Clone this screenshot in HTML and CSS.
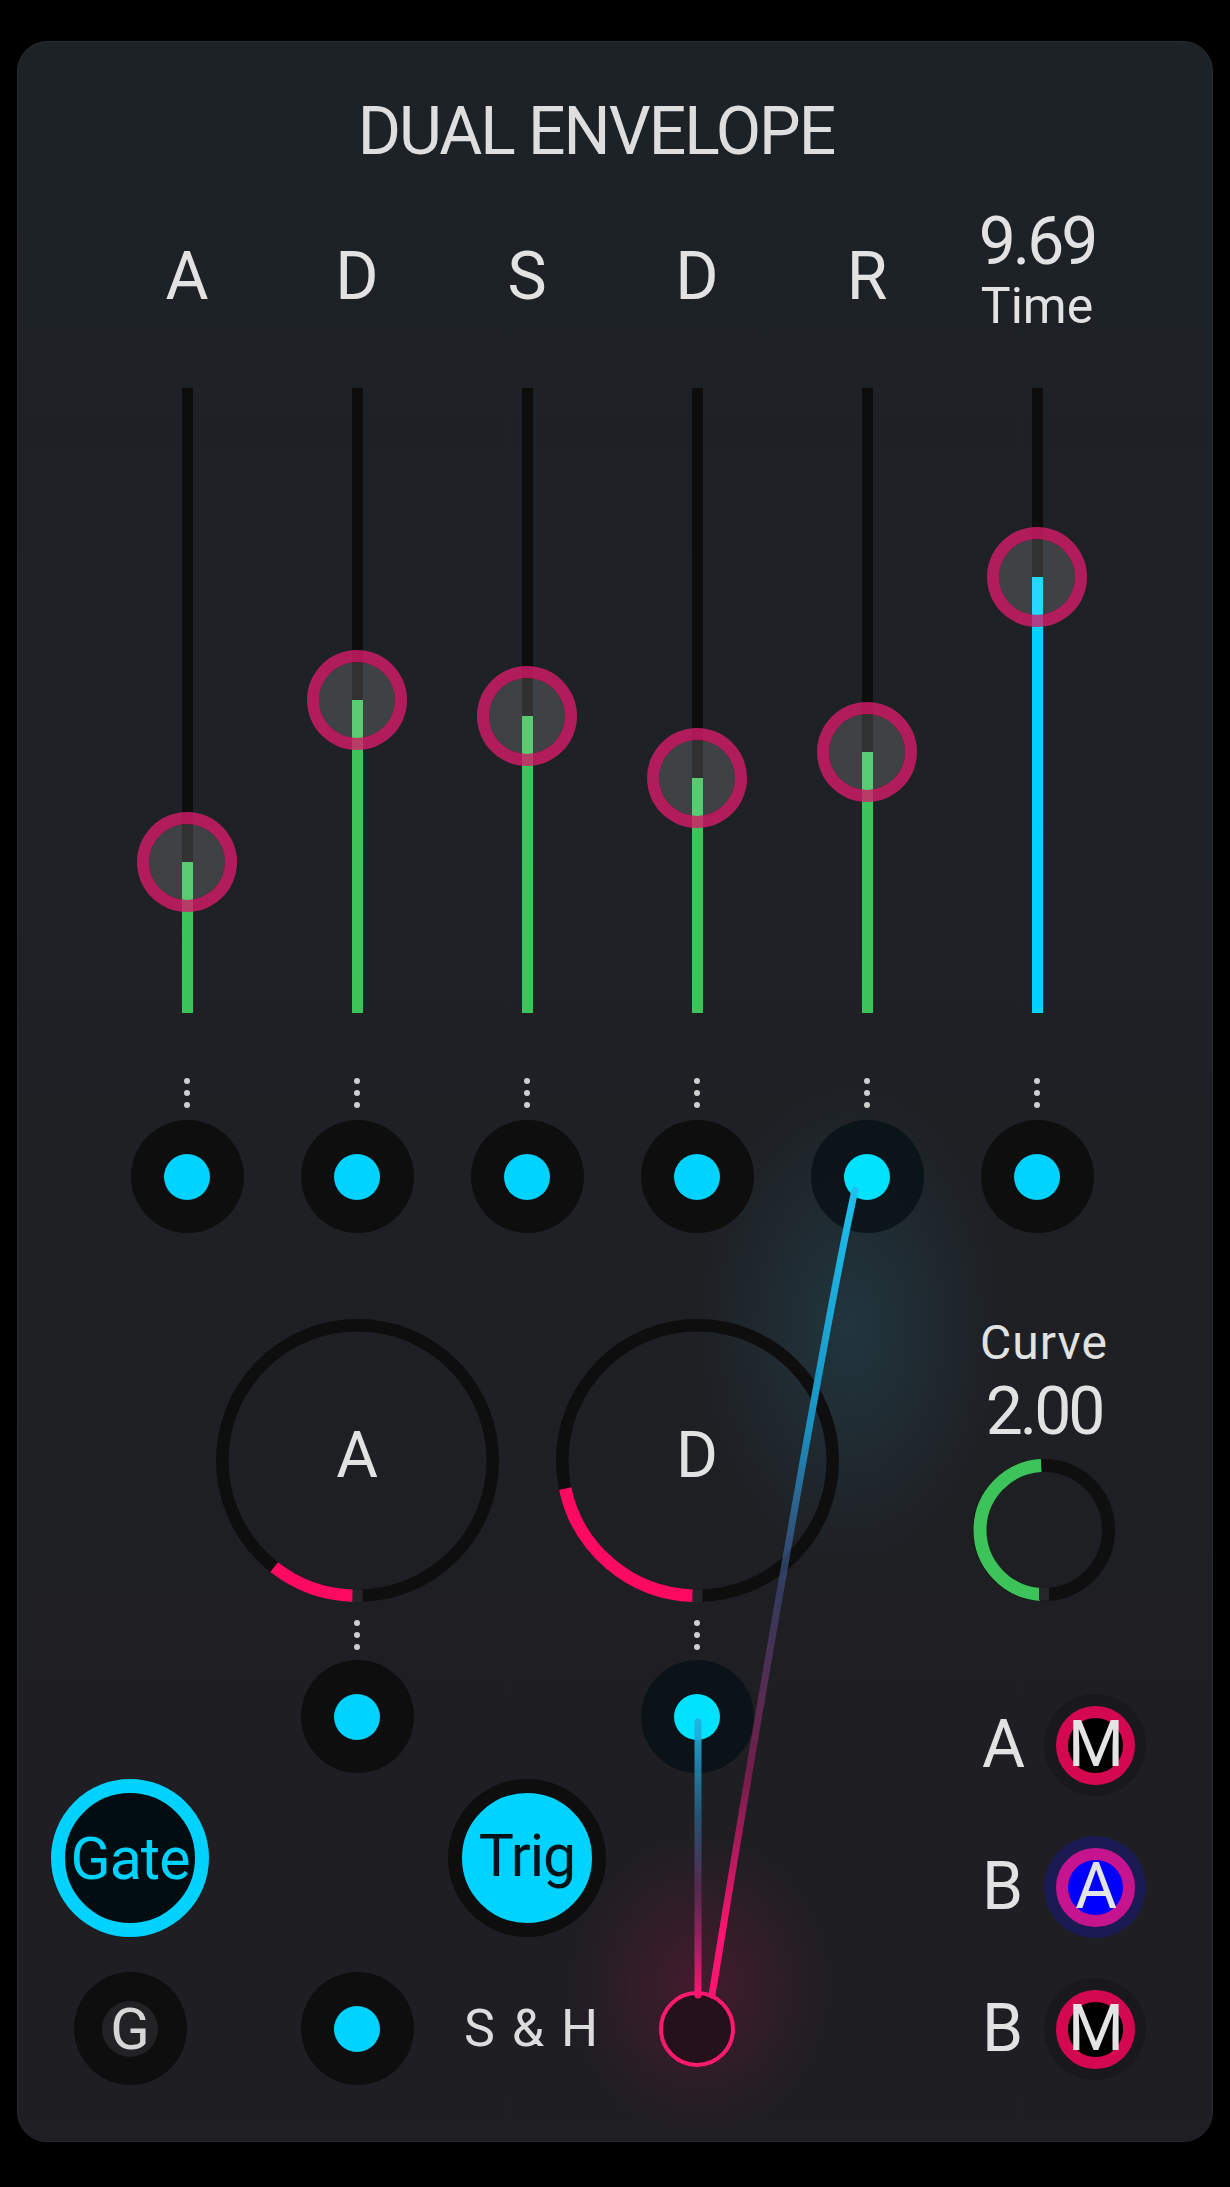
FILE: index.html
```html
<!DOCTYPE html>
<html lang="en">
<head>
  <meta charset="UTF-8">
  <meta name="viewport" content="width=device-width, initial-scale=1.0">
  <title>Dual Envelope</title>
  <link rel="stylesheet" href="styles.css">
</head>
<body>
  <div class="panel">
    <h1 class="title">DUAL ENVELOPE</h1>

    <div class="sliders">
      <div class="col">
        <div class="label">A</div>
        <div class="slider" style="--v:151px"><div class="track"><div class="fill"></div></div><div class="thumb"></div></div>
        <div class="dots"><i></i><i></i><i></i></div>
        <div class="jack"><span></span></div>
      </div>
      <div class="col">
        <div class="label">D</div>
        <div class="slider" style="--v:313px"><div class="track"><div class="fill"></div></div><div class="thumb"></div></div>
        <div class="dots"><i></i><i></i><i></i></div>
        <div class="jack"><span></span></div>
      </div>
      <div class="col">
        <div class="label">S</div>
        <div class="slider" style="--v:297px"><div class="track"><div class="fill"></div></div><div class="thumb"></div></div>
        <div class="dots"><i></i><i></i><i></i></div>
        <div class="jack"><span></span></div>
      </div>
      <div class="col">
        <div class="label">D</div>
        <div class="slider" style="--v:235px"><div class="track"><div class="fill"></div></div><div class="thumb"></div></div>
        <div class="dots"><i></i><i></i><i></i></div>
        <div class="jack"><span></span></div>
      </div>
      <div class="col">
        <div class="label">R</div>
        <div class="slider" style="--v:261px"><div class="track"><div class="fill"></div></div><div class="thumb"></div></div>
        <div class="dots"><i></i><i></i><i></i></div>
        <div class="jack linked"><span></span></div>
      </div>
      <div class="col">
        <div class="label label-time"><span class="value">9.69</span><span class="unit">Time</span></div>
        <div class="slider" style="--v:436px"><div class="track"><div class="fill time-fill"></div></div><div class="thumb"></div></div>
        <div class="dots"><i></i><i></i><i></i></div>
        <div class="jack"><span></span></div>
      </div>
    </div>

    <div class="lower">
      <div class="lower-grid">
        <!-- row 1: big knobs -->
        <div class="cell c2 r1">
          <div class="knob">
            <svg width="283" height="283" viewBox="0 0 283 283">
              <circle cx="141.5" cy="141.5" r="135.25" fill="none" stroke="#0e0e0f" stroke-width="12.5"/>
              <path d="M136.8 276.7 A135.25 135.25 0 0 1 58.2 248.1" fill="none" stroke="#ff0a62" stroke-width="12.5"/>
              <rect x="136.5" y="270.5" width="10" height="12.5" fill="#26262a"/>
            </svg>
            <span class="knob-label">A</span>
          </div>
        </div>
        <div class="cell c4 r1">
          <div class="knob">
            <svg width="283" height="283" viewBox="0 0 283 283">
              <circle cx="141.5" cy="141.5" r="135.25" fill="none" stroke="#0e0e0f" stroke-width="12.5"/>
              <path d="M136.8 276.7 A135.25 135.25 0 0 1 9.2 169.6" fill="none" stroke="#ff0a62" stroke-width="12.5"/>
              <rect x="136.5" y="270.5" width="10" height="12.5" fill="#26262a"/>
            </svg>
            <span class="knob-label">D</span>
          </div>
        </div>

        <!-- row 2: knob mod inputs -->
        <div class="cell c2 r2">
          <div class="dots small"><i></i><i></i><i></i></div>
          <div class="jack"><span></span></div>
        </div>
        <div class="cell c4 r2">
          <div class="dots small"><i></i><i></i><i></i></div>
          <div class="jack linked"><span></span></div>
        </div>

        <!-- row 3: gate / trig -->
        <div class="cell c1 r3">
          <div class="btn-gate">Gate</div>
        </div>
        <div class="cell c3 r3">
          <div class="btn-trig">Trig</div>
        </div>

        <!-- row 4 -->
        <div class="cell c1 r4">
          <div class="btn-g"><span>G</span></div>
        </div>
        <div class="cell c2 r4">
          <div class="jack"><span></span></div>
        </div>
        <div class="cell c3 r4 mid">
          <div class="sh">S &amp; H</div>
        </div>
        <div class="cell c4 r4 mid">
          <div class="out-jack"></div>
        </div>
      </div>

      <div class="side">
        <div class="curve-name">Curve</div>
        <div class="curve-value">2.00</div>
        <div class="curve-knob">
          <svg width="142" height="142" viewBox="0 0 142 142">
            <circle cx="71" cy="71" r="64.5" fill="none" stroke="#0f0f10" stroke-width="13"/>
            <path d="M67.6 135.4 A64.5 64.5 0 0 1 68.2 6.6" fill="none" stroke="#3cc45a" stroke-width="13"/>
            <rect x="66" y="128.5" width="10" height="13" fill="#262629"/>
          </svg>
        </div>

        <div class="mrow first">
          <span class="mlabel">A</span>
          <div class="mbtn"><span>M</span></div>
        </div>
        <div class="mrow">
          <span class="mlabel">B</span>
          <div class="mbtn active"><span>A</span></div>
        </div>
        <div class="mrow">
          <span class="mlabel">B</span>
          <div class="mbtn"><span>M</span></div>
        </div>
      </div>
    </div>

    <svg class="cables" width="1194" height="2099" viewBox="0 0 1194 2099">
      <defs>
        <linearGradient id="cableLong" gradientUnits="userSpaceOnUse" x1="0" y1="1148" x2="0" y2="1953">
          <stop offset="0" stop-color="#1ec0ee"/>
          <stop offset="0.3" stop-color="#1a90c0"/>
          <stop offset="0.5" stop-color="rgba(70,80,140,0.55)"/>
          <stop offset="0.72" stop-color="rgba(170,30,100,0.6)"/>
          <stop offset="0.92" stop-color="#ff1470"/>
          <stop offset="1" stop-color="#ff1470"/>
        </linearGradient>
        <linearGradient id="cableShort" gradientUnits="userSpaceOnUse" x1="0" y1="1675" x2="0" y2="1953">
          <stop offset="0" stop-color="#1eb6e6"/>
          <stop offset="0.35" stop-color="rgba(40,120,170,0.6)"/>
          <stop offset="0.62" stop-color="rgba(120,50,110,0.55)"/>
          <stop offset="1" stop-color="#ff1470"/>
        </linearGradient>
      </defs>
      <path d="M837 1148 C812 1258 742 1658 694 1953" fill="none" stroke="url(#cableLong)" stroke-width="7" stroke-linecap="round"/>
      <path d="M680 1680 L680 1953" fill="none" stroke="url(#cableShort)" stroke-width="7" stroke-linecap="round"/>
    </svg>
  </div>
</body>
</html>
```

FILE: styles.css
```css
* {
  box-sizing: border-box;
}

body {
  margin: 0;
  background: #000;
  font-family: Roboto, "Liberation Sans", sans-serif;
  color: #e2e2e2;
}

.panel {
  position: relative;
  width: 1196px;
  height: 2101px;
  margin: 41px 0 0 17px;
  padding-top: 57px;
  border: 1px solid #262b2f;
  border-radius: 30px;
  overflow: hidden;
  background:
    radial-gradient(ellipse 150px 240px at 832px 1285px, rgba(40, 110, 130, 0.28), rgba(40, 110, 130, 0) 100%),
    radial-gradient(ellipse 130px 150px at 682px 1943px, rgba(160, 20, 75, 0.28), rgba(160, 20, 75, 0) 100%),
    linear-gradient(180deg, #1d2226 0%, #1e2024 55%, #1f1e22 100%);
}

.title {
  margin: 0;
  padding-right: 38px;
  font-size: 66px;
  line-height: 1;
  font-weight: 400;
  letter-spacing: -2px;
  text-align: center;
  color: #dedede;
}

/* top section: six faders */
.sliders {
  display: grid;
  grid-template-columns: repeat(6, 170px);
  margin: 51px 0 0 84px;
}

.col {
  display: flex;
  flex-direction: column;
  align-items: center;
}

.label {
  height: 122px;
  display: flex;
  flex-direction: column;
  justify-content: center;
  align-items: center;
  font-size: 66px;
  line-height: 1;
}

.label-time {
  padding-bottom: 14px;
}

.label-time .value {
  font-size: 66px;
  letter-spacing: -3px;
}

.label-time .unit {
  font-size: 50px;
  margin-top: 6px;
}

.slider {
  position: relative;
  width: 100px;
  height: 625px;
  margin-top: 50px;
}

.track {
  position: relative;
  width: 11px;
  height: 100%;
  margin: 0 auto;
  background: #0d0d0d;
}

.fill {
  position: absolute;
  left: 0;
  right: 0;
  bottom: 0;
  height: var(--v);
  background: #3cc45a;
}

.fill.time-fill {
  background: #00d2ff;
}

.thumb {
  position: absolute;
  left: 0;
  bottom: calc(var(--v) - 50px);
  width: 100px;
  height: 100px;
  border-radius: 50%;
  border: 12px solid rgba(215, 28, 105, 0.8);
  background: rgba(255, 255, 255, 0.15);
  background-clip: padding-box;
}

.dots {
  display: flex;
  flex-direction: column;
  gap: 6px;
  margin-top: 65px;
}

.dots i {
  display: block;
  width: 6px;
  height: 6px;
  border-radius: 50%;
  background: #cfcfcf;
}

.dots.small {
  margin-top: 2px;
}

.jack {
  width: 113px;
  height: 113px;
  margin-top: 12px;
  border-radius: 50%;
  background: #0e0e0f;
  display: flex;
  align-items: center;
  justify-content: center;
}

.jack span {
  width: 46px;
  height: 46px;
  border-radius: 50%;
  background: #00d3ff;
}

.jack.linked {
  background: rgba(8, 18, 22, 0.85);
}

.jack.linked span {
  background: #00e2ff;
}

/* lower section */
.lower {
  display: flex;
  margin-top: 86px;
}

.lower-grid {
  display: grid;
  grid-template-columns: 224px 230px 110px 230px;
  grid-template-rows: 299px 161px 193px 113px;
}

.cell {
  display: flex;
  flex-direction: column;
  align-items: center;
}

.cell.mid {
  justify-content: center;
}

.c1 { grid-column: 1; }
.c2 { grid-column: 2; }
.c3 { grid-column: 3; }
.c4 { grid-column: 4; }
.r1 { grid-row: 1; }
.r2 { grid-row: 2; }
.r3 { grid-row: 3; }
.r4 { grid-row: 4; }

.r2 .jack {
  margin-top: 10px;
}

.r4 .jack {
  margin-top: 0;
}

.knob {
  position: relative;
  width: 283px;
  height: 283px;
  flex: none;
}

.knob svg {
  display: block;
}

.knob-label {
  position: absolute;
  inset: 0;
  display: flex;
  align-items: center;
  justify-content: center;
  padding-bottom: 10px;
  font-size: 64px;
  line-height: 1;
}

.btn-gate,
.btn-trig {
  width: 158px;
  height: 158px;
  border-radius: 50%;
  border: 14px solid #00d2ff;
  display: flex;
  align-items: center;
  justify-content: center;
  font-size: 59px;
  line-height: 1;
  letter-spacing: -1px;
  flex: none;
}

.btn-gate {
  background: #020d12;
  color: #00d2ff;
}

.btn-trig {
  border-color: #0e0e0f;
  background: #00d3ff;
  color: #061318;
  padding-bottom: 6px;
}

.btn-g {
  width: 113px;
  height: 113px;
  border-radius: 50%;
  background: #0e0e0f;
  display: flex;
  align-items: center;
  justify-content: center;
}

.btn-g span {
  width: 56px;
  height: 56px;
  border-radius: 50%;
  background: #222225;
  display: flex;
  align-items: center;
  justify-content: center;
  font-size: 58px;
  line-height: 1;
  color: #d6d6d6;
}

.sh {
  font-size: 52px;
  line-height: 1;
  letter-spacing: 2px;
  padding-left: 10px;
  white-space: nowrap;
  color: #dcdcdc;
}

.out-jack {
  width: 76px;
  height: 76px;
  border-radius: 50%;
  border: 4px solid #ff1a6e;
  background: #24111a;
}

/* right column */
.side {
  width: 190px;
  margin-left: 137px;
  display: flex;
  flex-direction: column;
  align-items: center;
}

.curve-name {
  font-size: 48px;
  line-height: 1;
  letter-spacing: 1px;
}

.curve-value {
  margin-top: 12px;
  font-size: 66px;
  line-height: 1;
  letter-spacing: -3px;
}

.curve-knob {
  margin-top: 14px;
  height: 142px;
}

.curve-knob svg {
  display: block;
}

.mrow {
  align-self: flex-start;
  margin-left: 33px;
  margin-top: 40px;
  display: flex;
  align-items: center;
  gap: 22px;
}

.mrow.first {
  margin-top: 93px;
}

.mlabel {
  width: 40px;
  text-align: center;
  font-size: 66px;
  line-height: 1;
}

.mbtn {
  width: 102px;
  height: 102px;
  border-radius: 50%;
  background: #19191b;
  display: flex;
  align-items: center;
  justify-content: center;
}

.mbtn span {
  width: 79px;
  height: 79px;
  border-radius: 50%;
  border: 12px solid #d3084f;
  background: #000;
  display: flex;
  align-items: center;
  justify-content: center;
  font-size: 64px;
  line-height: 1;
  color: #e4e4e4;
  letter-spacing: -2px;
}

.mbtn.active {
  background: #1b1a52;
}

.mbtn.active span {
  border-color: #c5148e;
  background: #0000ff;
}

.cables {
  position: absolute;
  top: 0;
  left: 0;
  pointer-events: none;
}
```
